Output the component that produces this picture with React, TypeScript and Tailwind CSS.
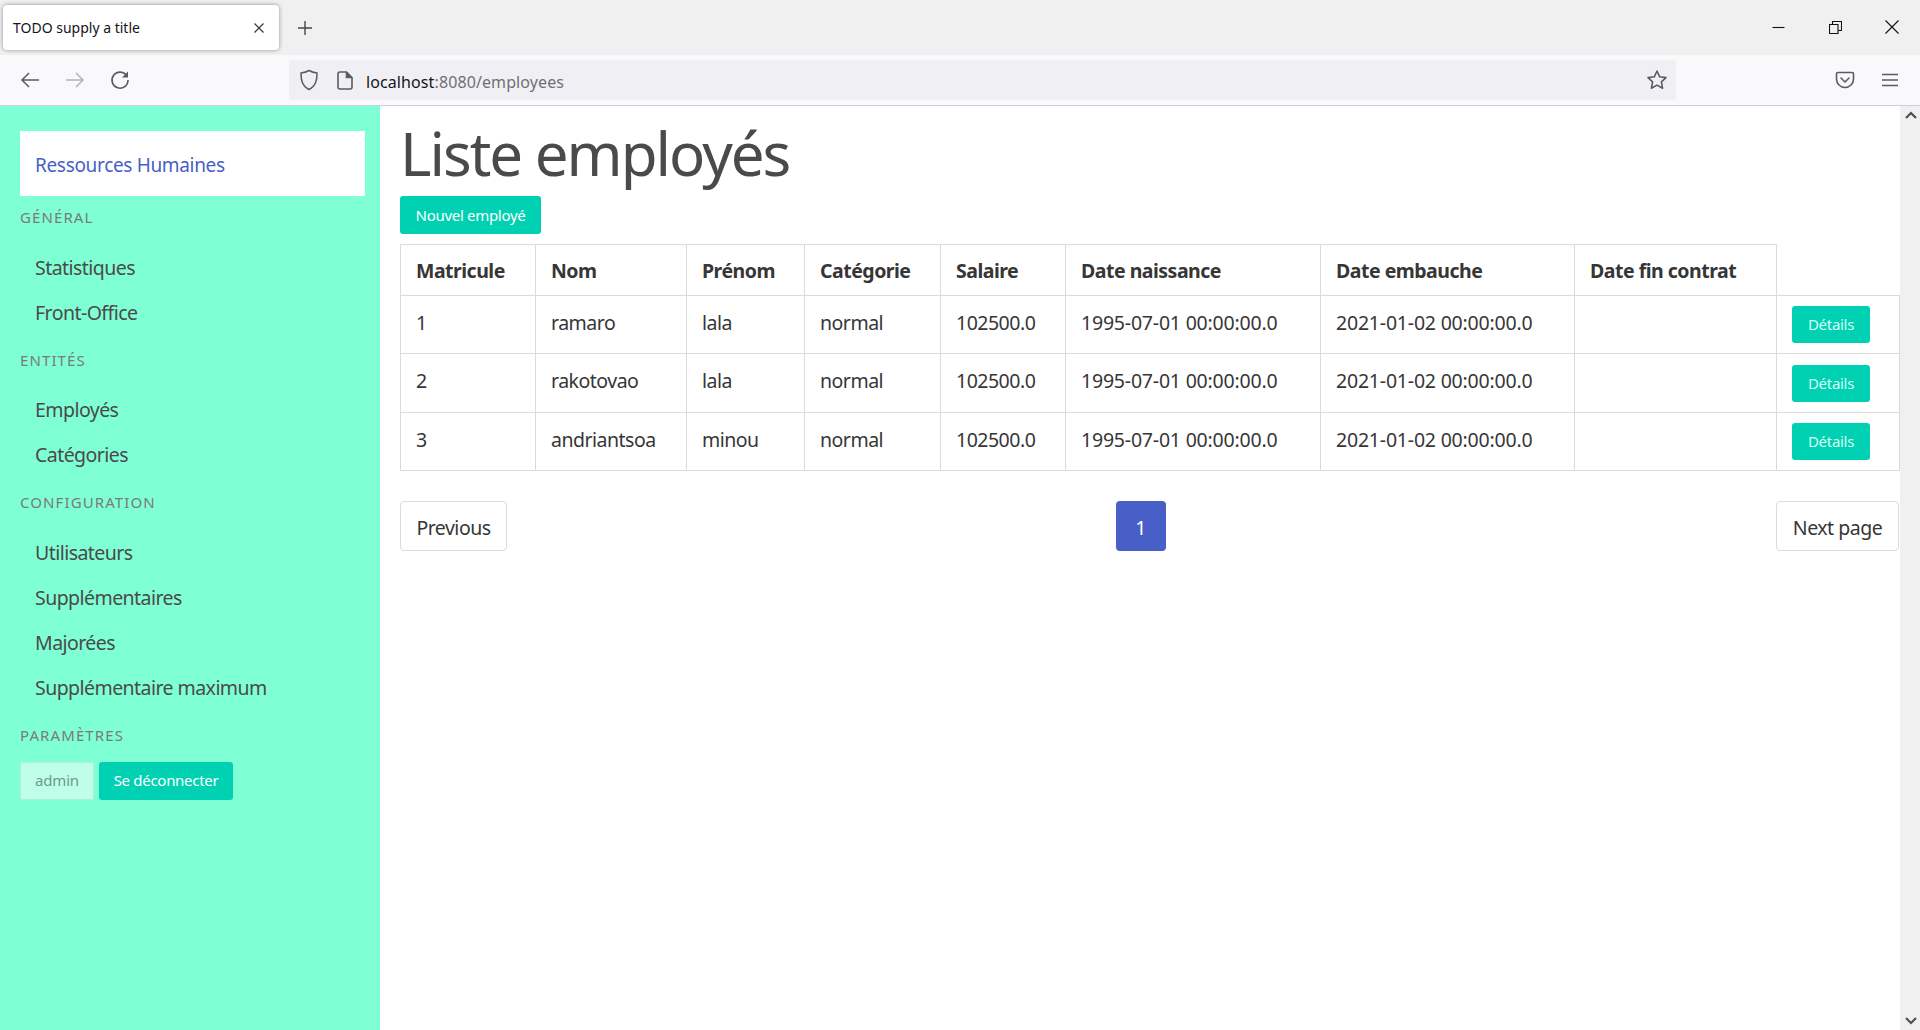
import React from 'react'

const sections = [
  { label: 'GÉNÉRAL', items: ['Statistiques', 'Front-Office'] },
  { label: 'ENTITÉS', items: ['Employés', 'Catégories'] },
  { label: 'CONFIGURATION', items: ['Utilisateurs', 'Supplémentaires', 'Majorées', 'Supplémentaire maximum'] },
]

const employees = [
  { id: 1, nom: 'ramaro', prenom: 'lala', rowClass: 'h-[58px]' },
  { id: 2, nom: 'rakotovao', prenom: 'lala', rowClass: 'h-[59px]' },
  { id: 3, nom: 'andriantsoa', prenom: 'minou', rowClass: 'h-[58px]' },
]

const headers = ['Matricule', 'Nom', 'Prénom', 'Catégorie', 'Salaire', 'Date naissance', 'Date embauche', 'Date fin contrat']

function BrowserChrome() {
  return (
    <div className="shrink-0 font-['Noto_Sans',sans-serif]">
      <div className="h-[55px] bg-[#f0f0f0] flex items-start pl-[3px]">
        <div className="mt-[5px] w-[276px] h-[45px] bg-white rounded-[4px] shadow-[0_0_4px_rgba(0,0,0,0.4)] flex items-center pl-[10px] pr-[14px] justify-between">
          <span className="text-[14px] tracking-[0px] text-[#15141a]">TODO supply a title</span>
          <svg width="12" height="12" viewBox="0 0 12 12" className="mt-px" stroke="#3d3d42" strokeWidth="1.3" fill="none"><path d="M1.5 1.5l9 9M10.5 1.5l-9 9" /></svg>
        </div>
        <svg width="16" height="16" viewBox="0 0 16 16" className="ml-[18px] mt-[20px]" stroke="#45454a" strokeWidth="1.4" fill="none"><path d="M8 1v14M1 8h14" /></svg>
        <div className="ml-auto flex items-center mt-[20px]">
          <svg width="13" height="13" viewBox="0 0 13 13" stroke="#111" strokeWidth="1.1" fill="none"><path d="M0.5 6.5h12" /></svg>
          <svg width="13" height="13" viewBox="0 0 13 13" className="ml-[44px]" stroke="#111" strokeWidth="1.1" fill="none"><path d="M0.5 3.5h8.5v9h-8.5zM3.5 3.5v-3h9v9h-3.5" /></svg>
          <svg width="14" height="14" viewBox="0 0 14 14" className="ml-[43px] mr-[21px]" stroke="#111" strokeWidth="1.1" fill="none"><path d="M0.5 0.5l13 13M13.5 0.5l-13 13" /></svg>
        </div>
      </div>
      <div className="h-[51px] bg-[#f9f9fb] border-b border-[#cfcfd8] flex items-start">
        <svg width="20" height="20" viewBox="0 0 20 20" className="ml-[20px] mt-[15px]" stroke="#5b5b66" strokeWidth="1.5" fill="none"><path d="M19 10H2M9 3l-7 7 7 7" /></svg>
        <svg width="20" height="20" viewBox="0 0 20 20" className="ml-[25px] mt-[15px]" stroke="#b4b4b9" strokeWidth="1.5" fill="none"><path d="M1 10h17M11 3l7 7-7 7" /></svg>
        <svg width="20" height="20" viewBox="0 0 20 20" className="ml-[25px] mt-[15px]" stroke="#5b5b66" strokeWidth="1.6" fill="none"><path d="M16.5 5.5A8 8 0 1 0 18 10" /><path d="M18 1.5v6h-6z" fill="#5b5b66" stroke="none" /></svg>
        <div className="ml-[159px] mt-[5px] w-[1387px] h-[40px] bg-[#f0f0f4] rounded-[4px] flex items-center">
          <svg width="20" height="22" viewBox="0 0 20 22" className="ml-[10px]" stroke="#5b5b66" strokeWidth="1.5" fill="none"><path d="M10 1.5c3 1.8 5 2.2 8 2.5 0 7-1 13-8 16.5C3 17 2 11 2 4c3-.3 5-.7 8-2.5z" /></svg>
          <svg width="16" height="19" viewBox="0 0 16 19" className="ml-[18px]" stroke="#5b5b66" strokeWidth="1.6" fill="none"><path d="M3 1h6.5L15 6.5V16a2 2 0 0 1-2 2H3a2 2 0 0 1-2-2V3a2 2 0 0 1 2-2z" /><path d="M9.5 1v5.5H15" fill="#5b5b66" /></svg>
          <span className="ml-[13px] pt-[3px] text-[16px] tracking-[0.1px] text-[#15141a]">localhost<span className="text-[#6f6f78]">:8080/employees</span></span>
          <svg width="22" height="22" viewBox="0 0 22 22" className="ml-auto mr-[8px]" stroke="#5b5b66" strokeWidth="1.6" strokeLinejoin="round" fill="none"><path d="M11 2l2.7 5.8 6.3.8-4.6 4.3 1.2 6.3L11 16.1 5.4 19.2l1.2-6.3L2 8.6l6.3-.8z" /></svg>
        </div>
        <svg width="20" height="18" viewBox="0 0 20 18" className="ml-[159px] mt-[16px]" stroke="#5b5b66" strokeWidth="1.6" strokeLinecap="round" strokeLinejoin="round" fill="none"><path d="M3 1.5h14a1.5 1.5 0 0 1 1.5 1.5v5a8.5 8.5 0 0 1-17 0V3A1.5 1.5 0 0 1 3 1.5z" /><path d="M6 7l4 4 4-4" /></svg>
        <svg width="18" height="14" viewBox="0 0 18 14" className="ml-[26px] mt-[18px]" stroke="#5b5b66" strokeWidth="1.6" fill="none"><path d="M1 1.5h16M1 7h16M1 12.5h16" /></svg>
      </div>
    </div>
  )
}

function Sidebar() {
  return (
    <aside className="w-[380px] shrink-0 bg-[#7fffd4] pt-[25px] pl-5">
      <div className="w-[345px] h-[65px] bg-white flex items-center pl-[15px] pt-[3px] text-[19px] tracking-[-0.33px] text-[#485fc7]">
        Ressources Humaines
      </div>
      {sections.map((s) => (
        <div key={s.label}>
          <div className="h-[45px] pt-[9px] text-[15px] leading-[24px] tracking-[1.1px] text-[#7a7a7a]">{s.label}</div>
          <ul className="pt-[4px] pb-[3.5px]">
            {s.items.map((item) => (
              <li key={item} className="h-[45px] pl-[15px] flex items-center text-[19.5px] tracking-[-0.55px] text-[#4a4a4a]">{item}</li>
            ))}
          </ul>
        </div>
      ))}
      <div className="h-[47px] pt-[9px] text-[15px] leading-[24px] tracking-[1.1px] text-[#7a7a7a]">PARAMÈTRES</div>
      <div className="flex gap-[5px] mt-[1px]">
        <div className="w-[74px] h-[38px] bg-[#bfffe9] border border-[#b2ecd9] flex items-center justify-center text-[15px] tracking-[-0.2px] text-[#6e9a8b]">admin</div>
        <button className="w-[134px] h-[38px] bg-[#00d1b2] rounded-[3px] text-white text-[15px] tracking-[-0.3px]">Se déconnecter</button>
      </div>
    </aside>
  )
}

function EmployeeTable() {
  const cell = 'border border-[#dbdbdb] pl-[15px] text-left align-middle'
  return (
    <table className="table-fixed border-collapse w-[1499px] mt-[10px] text-[19.5px] tracking-[-0.5px] text-[#363636]">
      <colgroup>
        <col className="w-[135px]" />
        <col className="w-[151px]" />
        <col className="w-[118px]" />
        <col className="w-[136px]" />
        <col className="w-[125px]" />
        <col className="w-[255px]" />
        <col className="w-[254px]" />
        <col className="w-[202px]" />
        <col className="w-[123px]" />
      </colgroup>
      <thead>
        <tr className="h-[51px]">
          {headers.map((h) => (
            <th key={h} className={cell + ' font-bold pt-[1px]'}>{h}</th>
          ))}
          <th />
        </tr>
      </thead>
      <tbody>
        {employees.map((e) => (
          <tr key={e.id} className={e.rowClass}>
            <td className={cell + ' pb-[4px]'}>{e.id}</td>
            <td className={cell + ' pb-[4px]'}>{e.nom}</td>
            <td className={cell + ' pb-[4px]'}>{e.prenom}</td>
            <td className={cell + ' pb-[4px]'}>normal</td>
            <td className={cell + ' pb-[4px]'}>102500.0</td>
            <td className={cell + ' pb-[4px] tracking-[-0.2px]'}>1995-07-01 00:00:00.0</td>
            <td className={cell + ' pb-[4px] tracking-[-0.2px]'}>2021-01-02 00:00:00.0</td>
            <td className={cell} />
            <td className={cell}>
              <button className="w-[78px] h-[37px] bg-[#00d1b2] rounded-[3px] text-[15px] tracking-[-0.3px] text-[#d6fff6] block">Détails</button>
            </td>
          </tr>
        ))}
      </tbody>
    </table>
  )
}

function Pagination() {
  return (
    <div className="mt-[30px] flex items-center justify-between w-[1499px] text-[19.5px] tracking-[-0.5px] text-[#363636]">
      <button className="w-[107px] h-[50px] pt-[3px] bg-white border border-[#dbdbdb] rounded-[4px]">Previous</button>
      <button className="w-[50px] h-[50px] pt-[3px] bg-[#485fc7] rounded-[4px] text-white ml-[-2px]">1</button>
      <button className="w-[123px] h-[50px] pt-[3px] bg-white border border-[#dbdbdb] rounded-[4px]">Next page</button>
    </div>
  )
}

export default function App() {
  return (
    <div className="w-[1920px] h-[1030px] flex flex-col overflow-hidden bg-white font-['Noto_Sans',sans-serif]">
      <BrowserChrome />
      <div className="flex flex-1 min-h-0">
        <Sidebar />
        <main className="flex-1 pl-5">
          <h1 className="text-[60px] leading-[90px] pt-[2px] h-[90px] tracking-[-2px] text-[#4a4a4a]">Liste employés</h1>
          <button className="block w-[141px] h-[38px] bg-[#00d1b2] rounded-[3px] text-white text-[15px] tracking-[-0.3px]">Nouvel employé</button>
          <EmployeeTable />
          <Pagination />
        </main>
        <div className="w-[21px] shrink-0 bg-[#f0f0f0] flex flex-col justify-between items-center py-[5px]">
          <svg width="12" height="9" viewBox="0 0 12 9" stroke="#505050" strokeWidth="2.2" fill="none"><path d="M1 7l5-5 5 5" /></svg>
          <svg width="12" height="9" viewBox="0 0 12 9" stroke="#505050" strokeWidth="2.2" fill="none"><path d="M1 2l5 5 5-5" /></svg>
        </div>
      </div>
    </div>
  )
}
